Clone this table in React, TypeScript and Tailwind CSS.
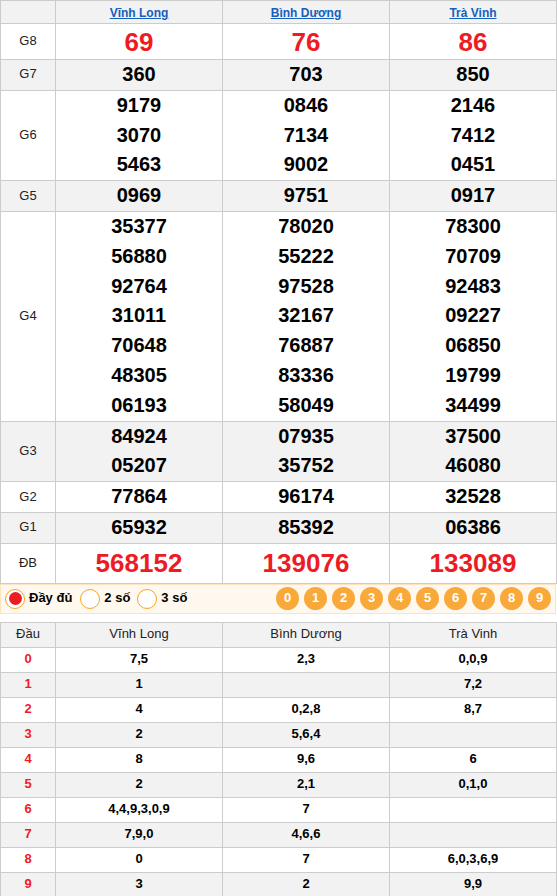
import React from "react";

const provinces = ["Vĩnh Long", "Bình Dương", "Trà Vinh"];

type Prize = { label: string; values: string[][]; big?: boolean; rowH?: string };

const prizes: Prize[] = [
  { label: "G8", values: [["69"], ["76"], ["86"]], big: true, rowH: "h-[36px]" },
  { label: "G7", values: [["360"], ["703"], ["850"]] },
  { label: "G6", values: [["9179", "3070", "5463"], ["0846", "7134", "9002"], ["2146", "7412", "0451"]] },
  { label: "G5", values: [["0969"], ["9751"], ["0917"]] },
  {
    label: "G4",
    values: [
      ["35377", "56880", "92764", "31011", "70648", "48305", "06193"],
      ["78020", "55222", "97528", "32167", "76887", "83336", "58049"],
      ["78300", "70709", "92483", "09227", "06850", "19799", "34499"],
    ],
  },
  { label: "G3", values: [["84924", "05207"], ["07935", "35752"], ["37500", "46080"]] },
  { label: "G2", values: [["77864"], ["96174"], ["32528"]] },
  { label: "G1", values: [["65932"], ["85392"], ["06386"]] },
  { label: "ĐB", values: [["568152"], ["139076"], ["133089"]], big: true, rowH: "h-[40px]" },
];

const heads: string[][] = [
  ["7,5", "2,3", "0,0,9"],
  ["1", "", "7,2"],
  ["4", "0,2,8", "8,7"],
  ["2", "5,6,4", ""],
  ["8", "9,6", "6"],
  ["2", "2,1", "0,1,0"],
  ["4,4,9,3,0,9", "7", ""],
  ["7,9,0", "4,6,6", ""],
  ["0", "7", "6,0,3,6,9"],
  ["3", "2", "9,9"],
];

function Cols() {
  return (
    <colgroup>
      <col className="w-[55px]" />
      <col className="w-[167px]" />
      <col className="w-[167px]" />
      <col className="w-[167px]" />
    </colgroup>
  );
}

const cell = "border border-[#cccccc] p-0 text-center align-middle";

export default function App() {
  return (
    <div className="w-[557px] bg-white font-[family-name:'Liberation_Sans',Arial,sans-serif] leading-[1.15] text-[#222]">
      <table className="w-[556px] table-fixed border-collapse">
        <Cols />
        <tbody>
          <tr className="h-[23px] bg-[#f2f2f2]">
            <td className={cell}></td>
            {provinces.map((p) => (
              <td key={p} className={cell}>
                <a className="text-[12px] font-bold text-[#1560bd] underline">{p}</a>
              </td>
            ))}
          </tr>
          {prizes.map((pr, i) => (
            <tr key={pr.label} className={(i % 2 === 1 ? "bg-[#f2f2f2] " : "bg-white ") + (pr.rowH ?? "")}>
              <td className={cell + " text-[13px]"}>{pr.label}</td>
              {pr.values.map((vals, j) => (
                <td key={j} className={cell}>
                  {vals.map((v) => (
                    <div
                      key={v}
                      className={
                        pr.big
                          ? "text-[26px] font-bold leading-[30px] text-[#ed1c24]"
                          : "text-[20px] font-bold leading-[29.8px] text-black"
                      }
                    >
                      {v}
                    </div>
                  ))}
                </td>
              ))}
            </tr>
          ))}
        </tbody>
      </table>

      <div className="flex h-[30px] w-[556px] items-center border border-[#fde3c0] bg-[#fff8ee] pl-[4px]">
        <div className="flex items-center gap-[4px]">
          <span className="flex h-[20px] w-[20px] items-center justify-center rounded-full border border-[#f5a623] bg-white">
            <span className="h-[13px] w-[13px] rounded-full bg-[#ed1c24]"></span>
          </span>
          <span className="text-[13px] font-bold text-black">Đầy đủ</span>
        </div>
        <div className="ml-[8px] flex items-center gap-[4px]">
          <span className="h-[20px] w-[20px] rounded-full border border-[#f5a623] bg-white"></span>
          <span className="text-[13px] font-bold text-black">2 số</span>
        </div>
        <div className="ml-[7px] flex items-center gap-[4px]">
          <span className="h-[20px] w-[20px] rounded-full border border-[#f5a623] bg-white"></span>
          <span className="text-[13px] font-bold text-black">3 số</span>
        </div>
        <div className="ml-auto mr-[4px] flex gap-[5px]">
          {[0, 1, 2, 3, 4, 5, 6, 7, 8, 9].map((n) => (
            <span
              key={n}
              className="flex h-[23px] w-[23px] items-center justify-center rounded-full bg-[#f9a93a] text-[13px] font-bold text-white"
            >
              {n}
            </span>
          ))}
        </div>
      </div>

      <table className="mt-[8px] w-[556px] table-fixed border-collapse">
        <Cols />
        <tbody>
          <tr className="h-[25px] bg-[#f2f2f2]">
            <td className={cell + " text-[13px]"}>Đầu</td>
            {provinces.map((p) => (
              <td key={p} className={cell + " text-[13px]"}>
                {p}
              </td>
            ))}
          </tr>
          {heads.map((row, i) => (
            <tr key={i} className={"h-[25px] " + (i % 2 === 1 ? "bg-[#f2f2f2]" : "bg-white")}>
              <td className={cell + " text-[13px] font-bold text-[#ed1c24]"}>{i}</td>
              {row.map((v, j) => (
                <td key={j} className={cell + " text-[13px] font-bold text-black"}>
                  {v}
                </td>
              ))}
            </tr>
          ))}
        </tbody>
      </table>
    </div>
  );
}
